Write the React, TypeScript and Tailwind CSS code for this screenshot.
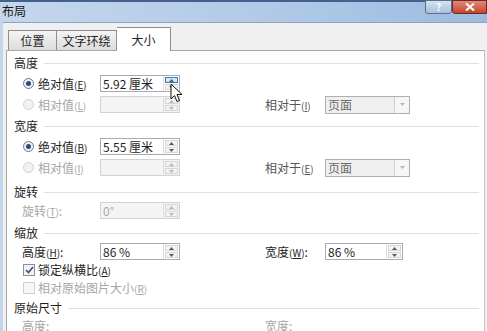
import React from 'react'

const FONT = "font-['Noto_Sans_CJK_SC','Noto_Sans',sans-serif]"

function Arrow({ up, dim }: { up?: boolean; dim?: boolean }) {
  return (
    <svg width="5" height="3" viewBox="0 0 5 3">
      <path d={up ? 'M0 3 L2.5 0 L5 3 Z' : 'M0 0 L2.5 3 L5 0 Z'} fill={dim ? '#b8b8b8' : '#5a5a5a'} />
    </svg>
  )
}

function Spin({ dim, hot }: { dim?: boolean; hot?: boolean }) {
  return (
    <div className="flex flex-col w-[16px] h-full border-l border-[#dcdcdc] p-px gap-px">
      <div
        className={`flex-1 flex items-center justify-center border ${
          hot ? 'bg-[#cfe6f7] border-[#3c7fb1]' : 'bg-[#f3f3f3] border-[#d6d6d6]'
        }`}
      >
        <Arrow up dim={dim} />
      </div>
      <div className="flex-1 flex items-center justify-center border bg-[#f3f3f3] border-[#d6d6d6]">
        <Arrow dim={dim} />
      </div>
    </div>
  )
}

function Field({ value = '', dim, hot, w = 'w-[80px]' }: { value?: string; dim?: boolean; hot?: boolean; w?: string }) {
  return (
    <div
      className={`${w} h-[17px] flex border ${
        dim ? 'border-[#d2d2d2] bg-[#f4f4f4] text-[#a8a8a8]' : 'border-[#a9abb0] bg-white text-[#1e1e1e]'
      }`}
    >
      <span className="flex-1 pl-[2px] leading-[15px] text-[12px] whitespace-pre">{value}</span>
      <Spin dim={dim} hot={hot} />
    </div>
  )
}

function Combo() {
  return (
    <div className="w-[85px] h-[18px] flex border border-[#b0b0b0] bg-[#efefef] text-[#6a6a6a]">
      <span className="flex-1 pl-[2px] leading-[16px]">页面</span>
      <div className="w-[15px] h-full border-l border-[#d0d0d0] bg-[#f6f6f6] flex items-center justify-center">
        <Arrow dim />
      </div>
    </div>
  )
}

function Radio({ on, dim }: { on?: boolean; dim?: boolean }) {
  return (
    <span
      className={`w-[11px] h-[11px] rounded-full border flex items-center justify-center ${
        dim ? 'border-[#d0d0d0] bg-[#f2f2f2]' : 'border-[#6e7b8b] bg-[#eef1f4]'
      }`}
    >
      {on && <span className="w-[5px] h-[5px] rounded-full bg-[#2b4a78]" />}
    </span>
  )
}

function Check({ on, dim }: { on?: boolean; dim?: boolean }) {
  return (
    <span
      className={`w-[12px] h-[12px] border flex items-center justify-center ${
        dim ? 'border-[#d0d0d0] bg-[#f7f7f7]' : 'border-[#8e8f8f] bg-[#f1f3f5]'
      }`}
    >
      {on && (
        <svg width="9" height="8" viewBox="0 0 9 8">
          <path d="M1 4 L3.5 6.5 L8 1" stroke="#3a5078" strokeWidth="1.6" fill="none" />
        </svg>
      )}
    </span>
  )
}

function Heading({ text, cls }: { text: string; cls: string }) {
  return (
    <div className={`flex items-center gap-[6px] pl-[7px] pr-[5px] h-[18px] ${cls}`}>
      <span className="text-[#1e1e1e]">{text}</span>
      <div className="flex-1 h-px bg-[#dcdfe3]" />
    </div>
  )
}

function Label({ text, k, dim, colon, soft }: { text: string; k: string; dim?: boolean; colon?: boolean; soft?: boolean }) {
  const tone = dim ? 'text-[#a6a6a6]' : soft ? 'text-[#555555]' : 'text-[#1e1e1e]'
  return (
    <span className={tone}>
      {text}
      <span className="text-[10px]">
        (<u>{k}</u>)
      </span>
      {colon && ':'}
    </span>
  )
}

export default function App() {
  return (
    <div className={`w-[487px] h-[331px] overflow-hidden relative bg-[#c3d5ea] text-[12px] ${FONT}`}>
      {/* title bar */}
      <div className="h-[22px] flex items-start bg-gradient-to-r from-[#c4d6ec] via-[#b3cbe8] to-[#9dbbe0] border-t-2 border-[#44608d]">
        <span className="pl-[2px] pt-[1px] leading-[16px] text-[#151515]">布局</span>
        <div className="flex-1" />
        <div className="w-[27px] h-[14px] -mt-[2px] rounded-b-[3px] border border-[#5d6f89] bg-gradient-to-b from-[#d7e3f1] to-[#a9bfdb] flex items-center justify-center text-white text-[10px] font-bold leading-[12px]">
          ?
        </div>
        <div className="w-[35px] h-[14px] -mt-[2px] rounded-bl-[3px] border border-[#6b2a22] bg-gradient-to-b from-[#e08a78] to-[#c4412c] flex items-center justify-center">
          <svg width="10" height="8" viewBox="0 0 10 8">
            <path d="M1 0.5 L9 7.5 M9 0.5 L1 7.5" stroke="#fff" strokeWidth="2" />
          </svg>
        </div>
      </div>

      {/* body */}
      <div className="ml-[3px] h-[309px] bg-[#f0f0f0] pl-[3px] pr-[2px] border-t border-[#8da3c0]">
        {/* tabs */}
        <div className="h-[27px] flex items-end pl-[2px]">
          <div className="w-[49px] h-[20px] border border-b-0 border-[#8c8e94] bg-gradient-to-b from-[#f4f4f4] to-[#dcdcdc] flex items-center justify-center text-[#1e1e1e]">
            位置
          </div>
          <div className="w-[60px] h-[20px] border border-l-0 border-b-0 border-[#8c8e94] bg-gradient-to-b from-[#f4f4f4] to-[#dcdcdc] flex items-center justify-center text-[#1e1e1e]">
            文字环绕
          </div>
          <div className="w-[54px] h-[24px] -mb-px relative z-10 border border-l-0 border-b-0 border-[#8c8e94] bg-white flex items-center justify-center text-[#1e1e1e]">
            大小
          </div>
        </div>

        {/* panel */}
        <div className="h-[300px] bg-white border border-[#a7a9ac] border-r-[#c4c4c4] relative">
          <Heading text="高度" cls="mt-[3px]" />
          <div className="flex items-center h-[21px] mt-[1px]">
            <div className="w-[93px] pl-[16px] flex items-center gap-[4px]">
              <Radio on />
              <Label text="绝对值" k="E" />
            </div>
            <Field value="5.92 厘米" hot />
          </div>
          <div className="flex items-center h-[21px]">
            <div className="w-[93px] pl-[16px] flex items-center gap-[4px]">
              <Radio dim />
              <Label text="相对值" k="L" dim />
            </div>
            <Field dim />
            <div className="w-[85px]" />
            <div className="w-[60px]">
              <Label text="相对于" k="I" soft />
            </div>
            <Combo />
          </div>

          <Heading text="宽度" cls="mt-[2px]" />
          <div className="flex items-center h-[21px] mt-[1px]">
            <div className="w-[93px] pl-[16px] flex items-center gap-[4px]">
              <Radio on />
              <Label text="绝对值" k="B" />
            </div>
            <Field value="5.55 厘米" />
          </div>
          <div className="flex items-center h-[21px]">
            <div className="w-[93px] pl-[16px] flex items-center gap-[4px]">
              <Radio dim />
              <Label text="相对值" k="I" dim />
            </div>
            <Field dim />
            <div className="w-[85px]" />
            <div className="w-[60px]">
              <Label text="相对于" k="E" soft />
            </div>
            <Combo />
          </div>

          <Heading text="旋转" cls="mt-[5px]" />
          <div className="flex items-center h-[19px]">
            <div className="w-[93px] pl-[15px]">
              <Label text="旋转" k="T" dim colon />
            </div>
            <Field value="0°" dim />
          </div>

          <Heading text="缩放" cls="mt-[4px]" />
          <div className="flex items-center h-[19px]">
            <div className="w-[93px] pl-[15px]">
              <Label text="高度" k="H" colon />
            </div>
            <Field value="86 %" />
            <div className="w-[85px]" />
            <div className="w-[60px]">
              <Label text="宽度" k="W" colon />
            </div>
            <Field value="86 %" w="w-[78px]" />
          </div>
          <div className="flex items-center h-[18px] pl-[16px] gap-[3px]">
            <Check on />
            <Label text="锁定纵横比" k="A" />
          </div>
          <div className="flex items-center h-[17px] pl-[16px] gap-[3px]">
            <Check dim />
            <Label text="相对原始图片大小" k="R" dim />
          </div>

          <Heading text="原始尺寸" cls="mt-[3px]" />
          <div className="flex items-center h-[17px] text-[#a6a6a6]">
            <div className="w-[258px] pl-[15px]">高度:</div>
            <div>宽度:</div>
          </div>

          {/* mouse pointer */}
          <svg className="absolute left-[163px] top-[32px]" width="13" height="20" viewBox="0 0 13 20">
            <path d="M1 1 L1 16 L4.5 12.5 L7 18.5 L9.5 17.5 L7 11.5 L12 11.5 Z" fill="#fff" stroke="#111" strokeWidth="1" />
          </svg>
        </div>
      </div>
    </div>
  )
}
